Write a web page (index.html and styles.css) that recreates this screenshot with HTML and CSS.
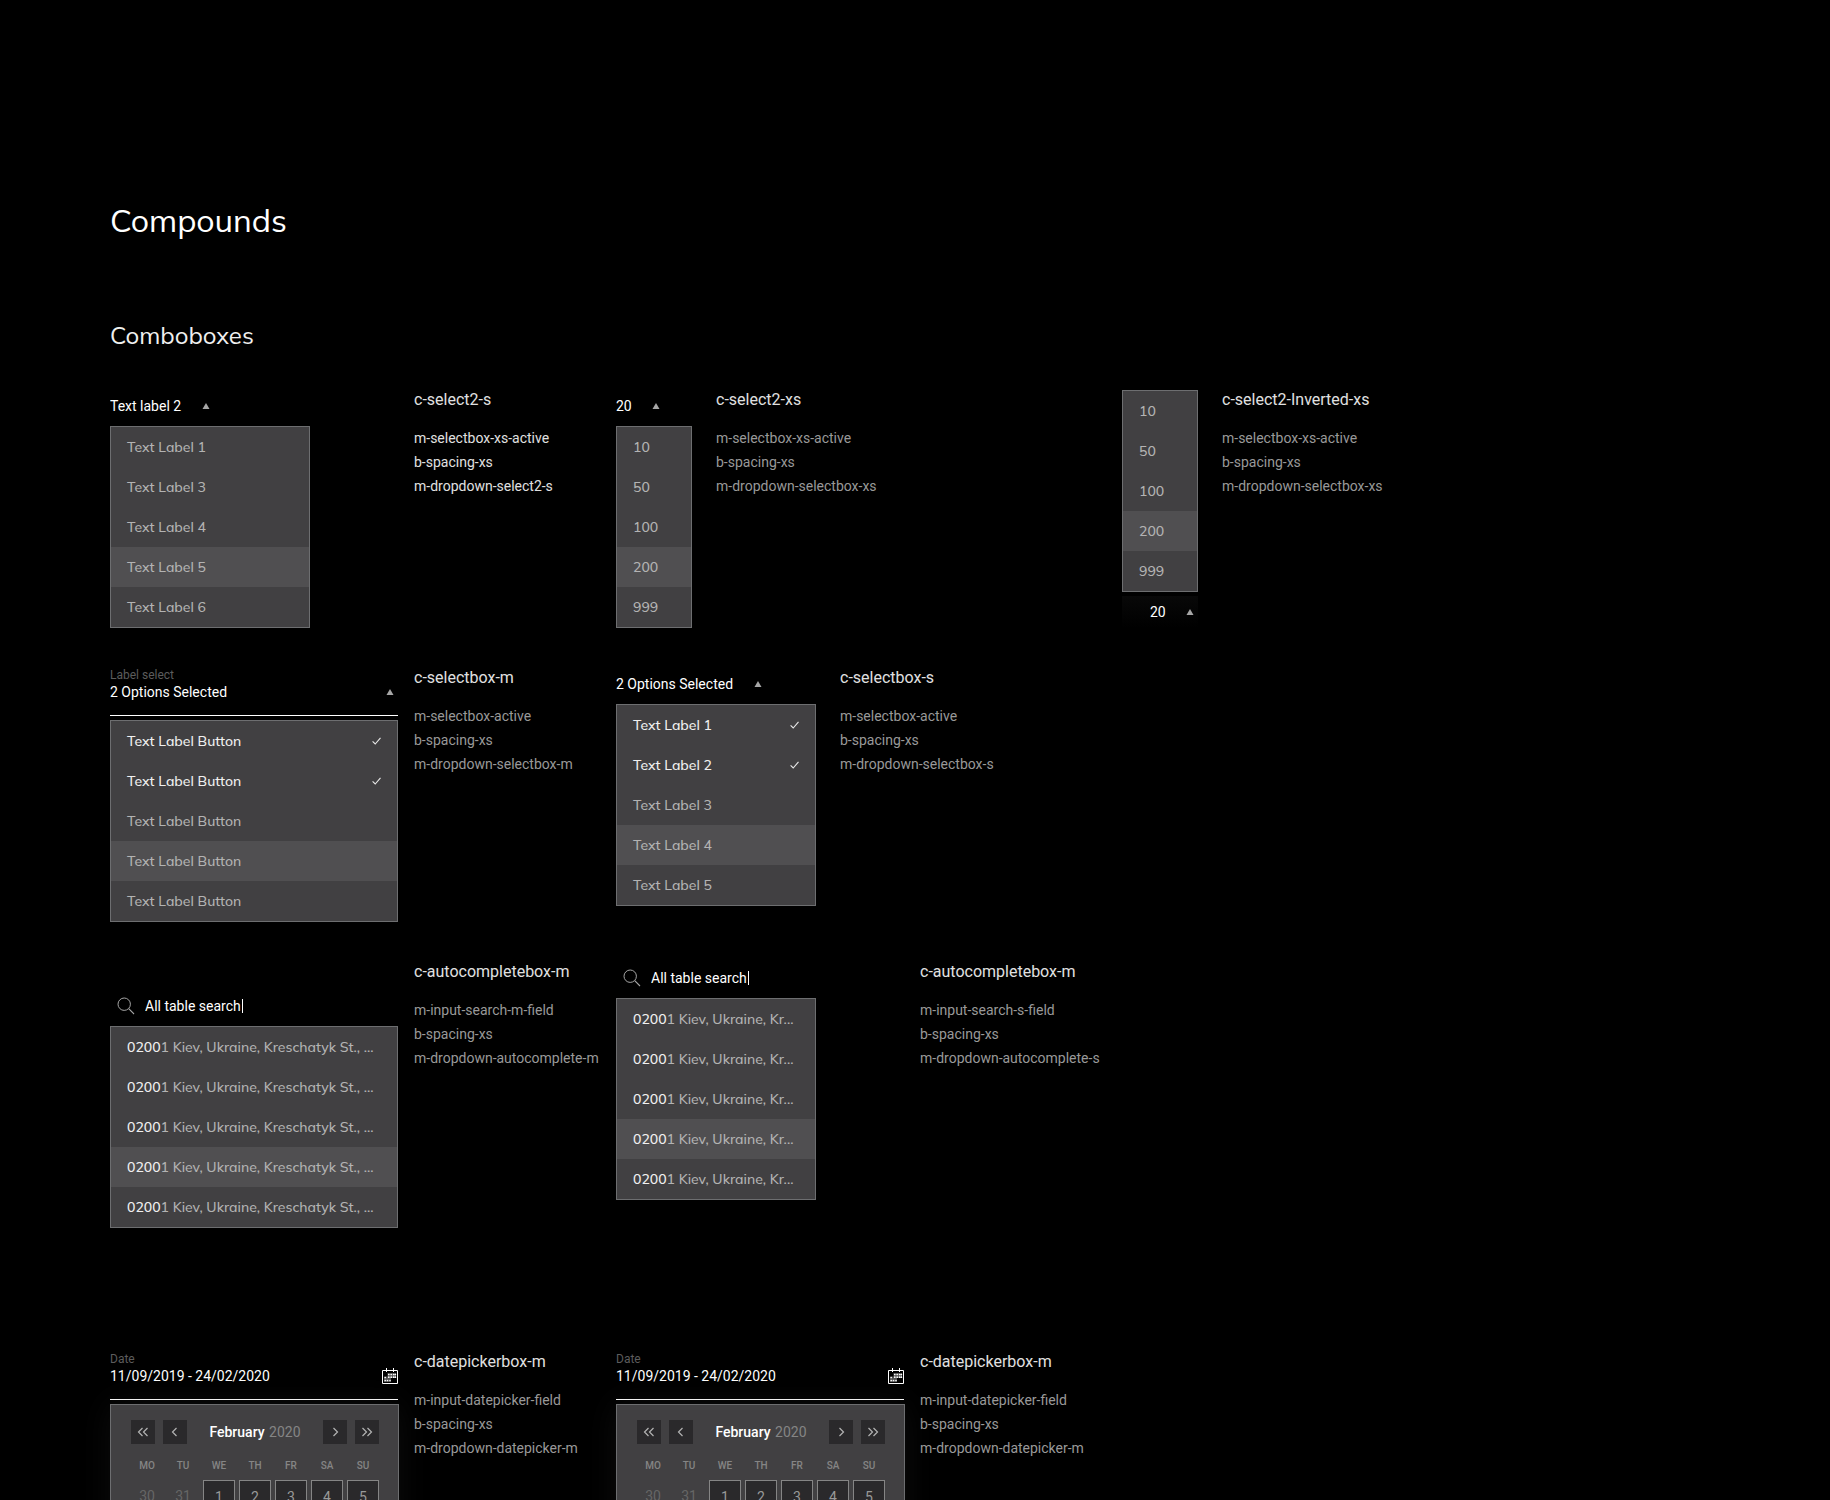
FILE: index.html
```html
<!DOCTYPE html>
<html lang="en">
<head>
  <meta charset="UTF-8" />
  <meta name="viewport" content="width=device-width, initial-scale=1.0" />
  <title>Compounds</title>
  <link rel="stylesheet" href="styles.css">
</head>
<body>
  <!-- Shared icons -->
  <svg class="sprite" aria-hidden="true">
    <symbol id="arrow" viewBox="0 0 8 6"><path d="M4 0L7.5 6H.5z" fill="#a6a6a6"/></symbol>
    <symbol id="check" viewBox="0 0 9 8"><path d="M.6 4.400L3.200 7 8.500.8" fill="none" stroke="#e8e8e8" stroke-width="1.1"/></symbol>
    <symbol id="search" viewBox="0 0 18 18"><circle cx="7.2" cy="7.2" r="6.2" fill="none" stroke="#a6a6a6"/><path d="M11.7 11.7L17 17" fill="none" stroke="#a6a6a6" stroke-width="1.1"/></symbol>
    <symbol id="calendar" viewBox="0 0 16 16">
      <path d="M.5 2.500h15v13H.5zM4.500 0v4M11.500 0v4" fill="none" stroke="#fff"/>
      <path d="M5.500 5H14v5H9v4H2V8.500h3.500z" fill="#555"/>
      <path d="M6.800 6.500h0M9.200 6.500h0M11.600 6.500h0M13.400 6.500h0M3.200 9.500h0M6.800 9.200h0M9.200 9.200h0M11.600 9.200h0M13.400 9.200h0M3.200 12.500h0M5.500 12.500h0M8 12.500h0" fill="none" stroke="#fff" stroke-width="1.7" stroke-linecap="round"/>
    </symbol>
    <symbol id="prev" viewBox="0 0 12 10"><path d="M7.500 1l-4 4 4 4" fill="none" stroke="#b3b3b3" stroke-width="1.2"/></symbol>
    <symbol id="next" viewBox="0 0 12 10"><path d="M4.500 1l4 4-4 4" fill="none" stroke="#b3b3b3" stroke-width="1.2"/></symbol>
    <symbol id="first" viewBox="0 0 12 10"><path d="M5.500 1l-4 4 4 4M10.500 1l-4 4 4 4" fill="none" stroke="#b3b3b3" stroke-width="1.2"/></symbol>
    <symbol id="last" viewBox="0 0 12 10"><path d="M1.500 1l4 4-4 4M6.500 1l4 4-4 4" fill="none" stroke="#b3b3b3" stroke-width="1.2"/></symbol>
  </svg>

  <main class="page">
    <h1>Compounds</h1>
    <h2>Comboboxes</h2>

    <!-- select2 -->
    <section class="row">
      <article class="compound">
        <div class="widget">
          <div class="trigger">
            <select aria-label="Text label"><option>Text label 2</option></select>
            <svg class="arrow"><use href="#arrow"/></svg>
          </div>
          <ul class="dropdown dropdown-s">
            <li>Text Label 1</li>
            <li>Text Label 3</li>
            <li>Text Label 4</li>
            <li class="hover">Text Label 5</li>
            <li>Text Label 6</li>
          </ul>
        </div>
        <div class="notes notes-light">
          <h3>c-select2-s</h3>
          <p>m-selectbox-xs-active</p>
          <p>b-spacing-xs</p>
          <p>m-dropdown-select2-s</p>
        </div>
      </article>

      <article class="compound compound-tight">
        <div class="widget">
          <div class="trigger">
            <select aria-label="Rows per page"><option>20</option></select>
            <svg class="arrow"><use href="#arrow"/></svg>
          </div>
          <ul class="dropdown dropdown-xs">
            <li>10</li>
            <li>50</li>
            <li>100</li>
            <li class="hover">200</li>
            <li>999</li>
          </ul>
        </div>
        <div class="notes">
          <h3>c-select2-xs</h3>
          <p>m-selectbox-xs-active</p>
          <p>b-spacing-xs</p>
          <p>m-dropdown-selectbox-xs</p>
        </div>
      </article>

      <article class="compound compound-tight">
        <div class="widget">
          <ul class="dropdown dropdown-xs">
            <li>10</li>
            <li>50</li>
            <li>100</li>
            <li class="hover">200</li>
            <li>999</li>
          </ul>
          <div class="trigger trigger-inverted">
            <select aria-label="Rows per page"><option>20</option></select>
            <svg class="arrow"><use href="#arrow"/></svg>
          </div>
        </div>
        <div class="notes">
          <h3>c-select2-Inverted-xs</h3>
          <p>m-selectbox-xs-active</p>
          <p>b-spacing-xs</p>
          <p>m-dropdown-selectbox-xs</p>
        </div>
      </article>
    </section>

    <!-- selectbox -->
    <section class="row">
      <article class="compound">
        <div class="widget">
          <div class="field">
            <label for="select-m">Label select</label>
            <div class="field-value">
              <select id="select-m"><option>2 Options Selected</option></select>
              <svg class="arrow"><use href="#arrow"/></svg>
            </div>
          </div>
          <ul class="dropdown">
            <li class="selected">Text Label Button <svg class="check"><use href="#check"/></svg></li>
            <li class="selected">Text Label Button <svg class="check"><use href="#check"/></svg></li>
            <li>Text Label Button</li>
            <li class="hover">Text Label Button</li>
            <li>Text Label Button</li>
          </ul>
        </div>
        <div class="notes">
          <h3>c-selectbox-m</h3>
          <p>m-selectbox-active</p>
          <p>b-spacing-xs</p>
          <p>m-dropdown-selectbox-m</p>
        </div>
      </article>

      <article class="compound compound-tight">
        <div class="widget">
          <div class="trigger">
            <select aria-label="Options"><option>2 Options Selected</option></select>
            <svg class="arrow"><use href="#arrow"/></svg>
          </div>
          <ul class="dropdown dropdown-s">
            <li class="selected">Text Label 1 <svg class="check"><use href="#check"/></svg></li>
            <li class="selected">Text Label 2 <svg class="check"><use href="#check"/></svg></li>
            <li>Text Label 3</li>
            <li class="hover">Text Label 4</li>
            <li>Text Label 5</li>
          </ul>
        </div>
        <div class="notes">
          <h3>c-selectbox-s</h3>
          <p>m-selectbox-active</p>
          <p>b-spacing-xs</p>
          <p>m-dropdown-selectbox-s</p>
        </div>
      </article>
    </section>

    <!-- autocompletebox -->
    <section class="row">
      <article class="compound">
        <div class="widget widget-search-m">
          <div class="search">
            <svg class="search-icon"><use href="#search"/></svg>
            <input type="text" aria-label="Search" value="All table search">
            <span class="caret"></span>
          </div>
          <ul class="dropdown">
            <li><span><b>0200</b>1 Kiev, Ukraine, Kreschatyk St., ...</span></li>
            <li><span><b>0200</b>1 Kiev, Ukraine, Kreschatyk St., ...</span></li>
            <li><span><b>0200</b>1 Kiev, Ukraine, Kreschatyk St., ...</span></li>
            <li class="hover"><span><b>0200</b>1 Kiev, Ukraine, Kreschatyk St., ...</span></li>
            <li><span><b>0200</b>1 Kiev, Ukraine, Kreschatyk St., ...</span></li>
          </ul>
        </div>
        <div class="notes">
          <h3>c-autocompletebox-m</h3>
          <p>m-input-search-m-field</p>
          <p>b-spacing-xs</p>
          <p>m-dropdown-autocomplete-m</p>
        </div>
      </article>

      <article class="compound">
        <div class="widget">
          <div class="search">
            <svg class="search-icon"><use href="#search"/></svg>
            <input type="text" aria-label="Search" value="All table search">
            <span class="caret"></span>
          </div>
          <ul class="dropdown dropdown-s">
            <li><span><b>0200</b>1 Kiev, Ukraine, Kr...</span></li>
            <li><span><b>0200</b>1 Kiev, Ukraine, Kr...</span></li>
            <li><span><b>0200</b>1 Kiev, Ukraine, Kr...</span></li>
            <li class="hover"><span><b>0200</b>1 Kiev, Ukraine, Kr...</span></li>
            <li><span><b>0200</b>1 Kiev, Ukraine, Kr...</span></li>
          </ul>
        </div>
        <div class="notes">
          <h3>c-autocompletebox-m</h3>
          <p>m-input-search-s-field</p>
          <p>b-spacing-xs</p>
          <p>m-dropdown-autocomplete-s</p>
        </div>
      </article>
    </section>

    <!-- datepickerbox -->
    <section class="row row-dates">
      <article class="compound">
        <div class="widget">
          <div class="field">
            <label for="date-1">Date</label>
            <div class="field-value">
              <input id="date-1" type="text" value="11/09/2019 - 24/02/2020">
              <svg class="calendar-icon"><use href="#calendar"/></svg>
            </div>
          </div>
          <div class="datepicker">
            <div class="datepicker-head">
              <button type="button" aria-label="Previous year"><svg><use href="#first"/></svg></button>
              <button type="button" aria-label="Previous month"><svg><use href="#prev"/></svg></button>
              <p><strong>February</strong> 2020</p>
              <button type="button" aria-label="Next month"><svg><use href="#next"/></svg></button>
              <button type="button" aria-label="Next year"><svg><use href="#last"/></svg></button>
            </div>
            <table>
              <thead>
                <tr><th>MO</th><th>TU</th><th>WE</th><th>TH</th><th>FR</th><th>SA</th><th>SU</th></tr>
              </thead>
              <tbody>
                <tr>
                  <td class="outside">30</td>
                  <td class="outside">31</td>
                  <td><button type="button">1</button></td>
                  <td><button type="button">2</button></td>
                  <td><button type="button">3</button></td>
                  <td><button type="button">4</button></td>
                  <td><button type="button">5</button></td>
                </tr>
              </tbody>
            </table>
          </div>
        </div>
        <div class="notes">
          <h3>c-datepickerbox-m</h3>
          <p>m-input-datepicker-field</p>
          <p>b-spacing-xs</p>
          <p>m-dropdown-datepicker-m</p>
        </div>
      </article>

      <article class="compound">
        <div class="widget">
          <div class="field">
            <label for="date-2">Date</label>
            <div class="field-value">
              <input id="date-2" type="text" value="11/09/2019 - 24/02/2020">
              <svg class="calendar-icon"><use href="#calendar"/></svg>
            </div>
          </div>
          <div class="datepicker">
            <div class="datepicker-head">
              <button type="button" aria-label="Previous year"><svg><use href="#first"/></svg></button>
              <button type="button" aria-label="Previous month"><svg><use href="#prev"/></svg></button>
              <p><strong>February</strong> 2020</p>
              <button type="button" aria-label="Next month"><svg><use href="#next"/></svg></button>
              <button type="button" aria-label="Next year"><svg><use href="#last"/></svg></button>
            </div>
            <table>
              <thead>
                <tr><th>MO</th><th>TU</th><th>WE</th><th>TH</th><th>FR</th><th>SA</th><th>SU</th></tr>
              </thead>
              <tbody>
                <tr>
                  <td class="outside">30</td>
                  <td class="outside">31</td>
                  <td><button type="button">1</button></td>
                  <td><button type="button">2</button></td>
                  <td><button type="button">3</button></td>
                  <td><button type="button">4</button></td>
                  <td><button type="button">5</button></td>
                </tr>
              </tbody>
            </table>
          </div>
        </div>
        <div class="notes">
          <h3>c-datepickerbox-m</h3>
          <p>m-input-datepicker-field</p>
          <p>b-spacing-xs</p>
          <p>m-dropdown-datepicker-m</p>
        </div>
      </article>
    </section>
  </main>
</body>
</html>
```

FILE: styles.css
```css
* {
  box-sizing: border-box;
}

body {
  margin: 0;
  height: 100vh;
  overflow: hidden;
  background: #000;
  color: #fff;
  font: 14px/20px Roboto, sans-serif;
}

h1, h2, h3, p, ul {
  margin: 0;
  padding: 0;
  font-weight: 400;
}

ul {
  list-style: none;
}

.sprite {
  display: none;
}

.page {
  padding: 200px 202px 0 110px;
}

h1, h2 {
  font-family: Muli, Mulish, "Open Sans", sans-serif;
}

h1 {
  margin-bottom: 80px;
  font-size: 32px;
  line-height: 40px;
}

h2 {
  margin-bottom: 40px;
  font-size: 24px;
  line-height: 30px;
  color: #f0f0f0;
}

/* Rows of compounds */
.row {
  display: grid;
  grid-template-columns: repeat(3, 1fr);
  margin-bottom: 40px;
}

.row-dates {
  margin-top: 124px;
}

.compound {
  display: flex;
  align-items: flex-start;
  gap: 16px;
}

.compound-tight {
  gap: 24px;
}

.widget {
  display: flex;
  flex-direction: column;
  gap: 4px;
  width: 288px;
}

.compound-tight .widget {
  width: auto;
}

.widget-search-m {
  padding-top: 28px;
}

.notes {
  color: #999;
  line-height: 24px;
  white-space: nowrap;
}

.notes h3 {
  margin-bottom: 16px;
  font-size: 16px;
  line-height: 20px;
  color: #e0e0e0;
}

.notes-light {
  color: #e0e0e0;
}

/* Form controls */
select, input {
  appearance: none;
  margin: 0;
  padding: 0;
  border: 0;
  outline: 0;
  background: none;
  color: #fff;
  font: inherit;
}

.trigger {
  display: flex;
  align-items: center;
  gap: 20px;
  height: 32px;
}

.trigger-inverted {
  justify-content: space-between;
  padding: 0 4px 0 28px;
  background: linear-gradient(#080808, #000);
}

.arrow {
  width: 8px;
  height: 6px;
}

.field {
  height: 48px;
  border-bottom: 1px solid #fff;
}

.field label {
  display: block;
  font-size: 12px;
  line-height: 14px;
  color: #5c5c5c;
}

.field-value {
  display: flex;
  align-items: center;
  justify-content: space-between;
  height: 20px;
}

.field-value .arrow {
  margin-right: 4px;
}

.calendar-icon {
  width: 16px;
  height: 16px;
}

.search {
  display: flex;
  align-items: center;
  height: 32px;
  padding-left: 7px;
}

.search-icon {
  width: 18px;
  height: 18px;
  margin-right: 10px;
}

.search input {
  width: 97px;
}

.caret {
  width: 1px;
  height: 14px;
  background: #fff;
}

/* Dropdown lists */
.dropdown {
  border: 1px solid #6d6e70;
  background: #414042;
  color: #b3b3b3;
  font-family: Muli, Mulish, "Open Sans", sans-serif;
  font-weight: 500;
}

.dropdown-s {
  width: 200px;
}

.dropdown-xs {
  width: 76px;
}

.dropdown li {
  display: flex;
  align-items: center;
  justify-content: space-between;
  height: 40px;
  padding: 0 16px;
  white-space: nowrap;
}

.dropdown .hover {
  background: #504f51;
}

.dropdown .selected,
.dropdown b {
  color: #f0f0f0;
  font-weight: 500;
}

.check {
  width: 9px;
  height: 8px;
}

/* Datepicker */
.datepicker {
  margin-right: -1px;
  padding: 15px 19px 24px 20px;
  border: 1px solid #6d6e70;
  background: #414042;
  box-shadow: 0 0 32px rgba(65, 64, 66, 0.2);
}

.datepicker-head {
  display: flex;
  gap: 8px;
  margin-bottom: 16px;
  line-height: 24px;
  color: #858585;
}

.datepicker-head p {
  flex: 1;
  text-align: center;
}

.datepicker-head strong {
  margin-right: 1px;
  font-weight: 500;
  color: #fff;
}

.datepicker button {
  padding: 0;
  border: 0;
  background: #2a292b;
  font: inherit;
}

.datepicker-head button {
  display: flex;
  align-items: center;
  justify-content: center;
  width: 24px;
  height: 24px;
}

.datepicker-head svg {
  width: 12px;
  height: 10px;
}

.datepicker table,
.datepicker thead,
.datepicker tbody {
  display: block;
}

.datepicker tr {
  display: grid;
  grid-template-columns: repeat(7, 32px);
  gap: 4px;
}

.datepicker th {
  padding: 0;
  margin-bottom: 8px;
  font-size: 10px;
  line-height: 12px;
  font-weight: 500;
  color: #858585;
}

.datepicker td {
  padding: 0;
  line-height: 32px;
  text-align: center;
  color: #999;
}

.datepicker td button {
  width: 32px;
  height: 32px;
  border: 1px solid #858585;
  color: #999;
}

.datepicker .outside {
  color: #666;
}
```
